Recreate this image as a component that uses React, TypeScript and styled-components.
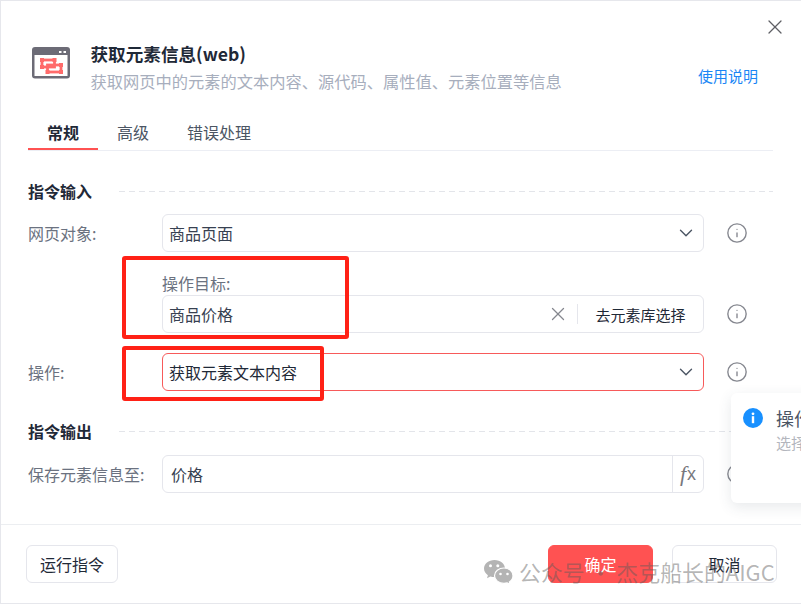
import React from 'react'
import styled, { createGlobalStyle } from 'styled-components'
import { ChevronDown, Info, X } from 'lucide-react'

const GlobalStyle = createGlobalStyle`
  html, body {
    margin: 0;
    padding: 0;
    background: #fff;
  }
  * {
    box-sizing: border-box;
  }
  body {
    font-family: "Noto Sans CJK SC", "Noto Sans", sans-serif;
  }
`

const Modal = styled.div`
  position: relative;
  width: 801px;
  height: 604px;
  overflow: hidden;
  display: flex;
  flex-direction: column;
  background: #fff;
  border-top: 1px solid #e6e7ec;
  border-bottom: 1px solid #e6e7ec;
  border-left: 1px solid #e6e7ec;
`

const TopBar = styled.div`
  height: 32px;
  padding: 14px 14px 0 0;
  display: flex;
  justify-content: flex-end;
  color: #5f6065;
`

const Head = styled.div`
  height: 47px;
  margin-top: 12px;
  padding: 0 43px 0 31px;
  display: flex;
  align-items: flex-start;
`

const HeadText = styled.div`
  flex: 1;
  margin-left: 20.5px;
`

const Title = styled.div`
  height: 20px;
  line-height: 18px;
  font-size: 17.6px;
  font-weight: 700;
  color: #1f2937;
  white-space: nowrap;
`

const Desc = styled.div`
  margin-top: 6px;
  height: 20px;
  line-height: 20px;
  font-size: 16.25px;
  color: #a7aebd;
  white-space: nowrap;
`

const HelpLink = styled.a`
  margin-top: 21px;
  line-height: 20px;
  font-size: 15px;
  color: #1a86f5;
  white-space: nowrap;
`

const Tabs = styled.div`
  display: flex;
  height: 35px;
  margin: 24px 28px 0 27px;
  border-bottom: 1px solid #eceef4;
`

const Tab = styled.div<{ $active?: boolean }>`
  height: 34px;
  padding: 1px 19px 0;
  line-height: 31px;
  font-size: 16px;
  font-weight: ${({ $active }) => ($active ? 700 : 400)};
  color: ${({ $active }) => ($active ? '#1f2937' : '#4b5563')};
  border-bottom: 2px solid ${({ $active }) => ($active ? '#ff5252' : 'transparent')};
`

const Body = styled.div`
  flex: 1;
  padding: 0 28px 0 27px;
`

const Section = styled.div<{ $after: number }>`
  display: flex;
  align-items: center;
  height: 22px;
  margin-top: 30px;
  margin-bottom: ${({ $after }) => $after}px;
`

const SectionTitle = styled.div`
  width: 91px;
  height: 22px;
  line-height: 20px;
  font-size: 16px;
  font-weight: 700;
  color: #1f2937;
`

const Dashed = styled.div`
  flex: 1;
  height: 1px;
  margin-top: -1px;
  background: repeating-linear-gradient(to right, #e3e5ea 0 6px, transparent 6px 10px);
`

const Row = styled.div<{ $gap?: number }>`
  display: grid;
  grid-template-columns: 134px 542px 1fr;
  align-items: end;
  margin-top: ${({ $gap }) => $gap ?? 0}px;
`

const Label = styled.div`
  height: 38px;
  line-height: 39px;
  font-size: 16px;
  color: #6b7280;
  white-space: nowrap;
`

const SubLabel = styled.div`
  height: 22px;
  line-height: 20px;
  font-size: 16px;
  color: #6b7280;
`

const Field = styled.div<{ $error?: boolean }>`
  display: flex;
  align-items: center;
  height: 38px;
  padding-left: 6px;
  border: 1px solid ${({ $error }) => ($error ? '#f75a5a' : '#e5e6ec')};
  border-radius: 6px;
  background: #fff;
`

const FieldText = styled.div<{ $dark?: boolean; $indent?: number }>`
  flex: 1;
  padding-left: ${({ $indent }) => $indent ?? 0}px;
  font-size: 16px;
  color: ${({ $dark }) => ($dark ? '#1f2937' : '#374151')};
  white-space: nowrap;
`

const Chevron = styled(ChevronDown)`
  margin-right: 6px;
  color: #4b5563;
`

const ClearIcon = styled(X)`
  color: #85878f;
`

const FieldDivider = styled.div`
  width: 1px;
  height: 20px;
  margin-left: 8px;
  background: #e5e6ec;
`

const PickButton = styled.div`
  width: 125px;
  text-align: center;
  font-size: 15px;
  color: #1f2937;
  white-space: nowrap;
`

const FxBox = styled.div`
  display: flex;
  align-items: center;
  justify-content: center;
  width: 31px;
  height: 100%;
  border-left: 1px solid #e5e6ec;
  font-family: "Liberation Sans", sans-serif;
  font-size: 18px;
  color: #77787d;
`

const FxLetter = styled.span`
  font-family: "Liberation Serif", serif;
  font-style: italic;
  font-size: 22px;
  margin-right: 1px;
`

const InfoCell = styled.div`
  display: flex;
  align-items: center;
  height: 38px;
  padding-left: 22px;
  color: #85878f;
`

const Footer = styled.div`
  display: flex;
  justify-content: space-between;
  height: 79px;
  padding: 20px 24px 20px 25px;
  border-top: 1px solid #eceef1;
`

const FooterRight = styled.div`
  display: flex;
  gap: 19px;
`

const Button = styled.div<{ $primary?: boolean; $width: number }>`
  width: ${({ $width }) => $width}px;
  height: 38px;
  line-height: 37px;
  text-align: center;
  font-size: 16px;
  border-radius: 6px;
  color: ${({ $primary }) => ($primary ? '#fff' : '#1f2937')};
  background: ${({ $primary }) => ($primary ? '#ff5252' : '#fff')};
  border: 1px solid ${({ $primary }) => ($primary ? '#ff5252' : '#e5e6ec')};
`

const Highlight = styled.div<{ $top: number; $width: number; $height: number }>`
  position: absolute;
  left: 121px;
  top: ${({ $top }) => $top}px;
  width: ${({ $width }) => $width}px;
  height: ${({ $height }) => $height}px;
  border: 4px solid #ff2116;
  border-radius: 3px;
`

const Toast = styled.div`
  position: absolute;
  left: 730px;
  top: 392px;
  width: 300px;
  height: 110px;
  display: flex;
  gap: 13px;
  padding: 14px 12px;
  background: #fff;
  border-radius: 6px;
  box-shadow: 0 4px 14px rgba(60, 70, 90, 0.12);
`

const ToastText = styled.div`
  white-space: nowrap;
`

const ToastTitle = styled.div`
  height: 22px;
  line-height: 22px;
  font-size: 18px;
  color: #4b5563;
`

const ToastDesc = styled.div`
  margin-top: 3px;
  line-height: 22px;
  font-size: 15px;
  color: #b3b6bd;
`

const Watermark = styled.div`
  position: absolute;
  left: 482px;
  top: 557px;
  display: flex;
  align-items: center;
  gap: 5px;
  font-size: 21.9px;
  line-height: 28px;
  color: rgba(90, 90, 90, 0.45);
  white-space: nowrap;
`

const AppIcon = () => (
  <svg width="38" height="32" viewBox="0 0 38 32" style={{ flexShrink: 0, marginTop: 2 }}>
    <rect x="0" y="0" width="38" height="31.5" rx="3" fill="#6c6b76" />
    <rect x="2.5" y="8" width="33" height="21" fill="#fff" />
    <rect x="27" y="4" width="2.5" height="2" fill="#fff" />
    <rect x="31.5" y="4" width="2.5" height="2" fill="#fff" />
    <g fill="none" stroke="#ff6b6b" strokeWidth="2.8">
      <rect x="10" y="13" width="12.5" height="7" />
      <rect x="15.5" y="18" width="13.5" height="7" />
    </g>
    <g fill="#ff6b6b">
      <rect x="8" y="11" width="4" height="4" />
      <rect x="8" y="18" width="4" height="4" />
      <rect x="20.5" y="11" width="4" height="4" />
      <rect x="13.5" y="23" width="4" height="4" />
      <rect x="27" y="16" width="4" height="4" />
      <rect x="27" y="23" width="4" height="4" />
    </g>
  </svg>
)

const ToastIcon = () => (
  <svg width="20" height="20" viewBox="0 0 20 20" style={{ flexShrink: 0, marginTop: 1 }}>
    <circle cx="10" cy="10" r="10" fill="#1890ff" />
    <rect x="8.8" y="8.2" width="2.4" height="7" fill="#fff" />
    <circle cx="10" cy="5.8" r="1.4" fill="#fff" />
  </svg>
)

const WechatIcon = () => (
  <svg width="31" height="26" viewBox="0 0 31 26">
    <path d="M11.5 1C5.6 1 1 4.9 1 9.6c0 2.7 1.5 5 3.9 6.6L4 19.2l3.4-1.8c1.3.4 2.7.6 4.1.6 5.9 0 10.5-3.8 10.5-8.4S17.4 1 11.5 1z" fill="#b4b4b4" />
    <path d="M21 9c-5.3 0-9.5 3.5-9.5 7.7s4.2 7.7 9.5 7.7c1.1 0 2.2-.2 3.2-.5l3 1.7-.8-2.7c2.2-1.4 3.6-3.7 3.6-6.2C30 12.5 26.3 9 21 9z" fill="#b4b4b4" stroke="#fff" strokeWidth="1.2" />
    <circle cx="7.5" cy="6.8" r="1.5" fill="#fff" />
    <circle cx="14.8" cy="6.8" r="1.5" fill="#fff" />
    <circle cx="17.5" cy="15" r="1.3" fill="#fff" />
    <circle cx="24.5" cy="15" r="1.3" fill="#fff" />
  </svg>
)

const InfoMark = () => (
  <InfoCell>
    <Info size={22} strokeWidth={1.5} />
  </InfoCell>
)

const App: React.FC = () => (
  <>
    <GlobalStyle />
    <Modal>
      <TopBar>
        <X size={24} strokeWidth={1.3} />
      </TopBar>
      <Head>
        <AppIcon />
        <HeadText>
          <Title>获取元素信息(web)</Title>
          <Desc>获取网页中的元素的文本内容、源代码、属性值、元素位置等信息</Desc>
        </HeadText>
        <HelpLink>使用说明</HelpLink>
      </Head>
      <Tabs>
        <Tab $active>常规</Tab>
        <Tab>高级</Tab>
        <Tab>错误处理</Tab>
      </Tabs>
      <Body>
        <Section $after={11}>
          <SectionTitle>指令输入</SectionTitle>
          <Dashed />
        </Section>
        <Row>
          <Label>网页对象:</Label>
          <Field>
            <FieldText>商品页面</FieldText>
            <Chevron size={22} strokeWidth={1.5} />
          </Field>
          <InfoMark />
        </Row>
        <Row $gap={21}>
          <div />
          <div>
            <SubLabel>操作目标:</SubLabel>
            <Field>
              <FieldText>商品价格</FieldText>
              <ClearIcon size={22} strokeWidth={1.4} />
              <FieldDivider />
              <PickButton>去元素库选择</PickButton>
            </Field>
          </div>
          <InfoMark />
        </Row>
        <Row $gap={20}>
          <Label>操作:</Label>
          <Field $error>
            <FieldText $dark>获取元素文本内容</FieldText>
            <Chevron size={22} strokeWidth={1.5} />
          </Field>
          <InfoMark />
        </Row>
        <Section $after={12}>
          <SectionTitle>指令输出</SectionTitle>
          <Dashed />
        </Section>
        <Row>
          <Label>保存元素信息至:</Label>
          <Field>
            <FieldText $indent={2}>价格</FieldText>
            <FxBox>
              <FxLetter>f</FxLetter>x
            </FxBox>
          </Field>
          <InfoMark />
        </Row>
      </Body>
      <Footer>
        <Button $width={92}>运行指令</Button>
        <FooterRight>
          <Button $primary $width={105}>确定</Button>
          <Button $width={105}>取消</Button>
        </FooterRight>
      </Footer>
      <Highlight $top={255} $width={227} $height={83} />
      <Highlight $top={345} $width={202} $height={55} />
      <Toast>
        <ToastIcon />
        <ToastText>
          <ToastTitle>操作说明</ToastTitle>
          <ToastDesc>选择需要执行的操作</ToastDesc>
        </ToastText>
      </Toast>
      <Watermark>
        <WechatIcon />
        公众号 · 杰克船长的AIGC
      </Watermark>
    </Modal>
  </>
)

export default App
